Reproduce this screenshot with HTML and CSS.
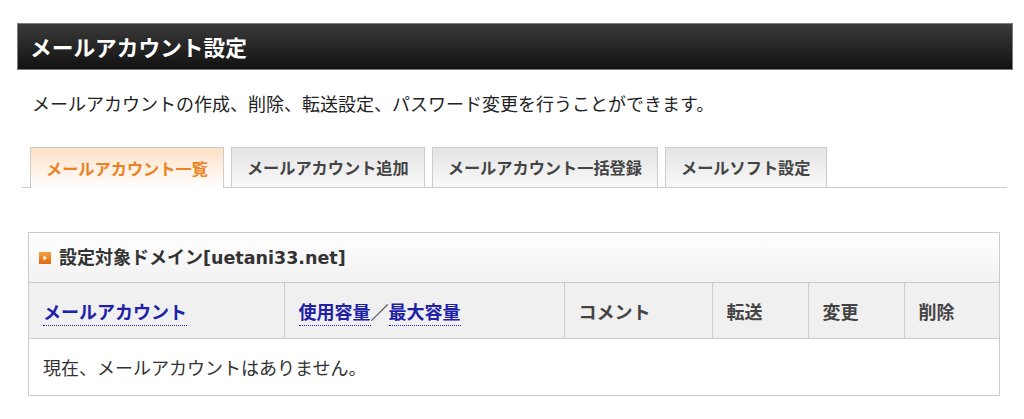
FILE: index.html
```html
<!DOCTYPE html>
<html lang="ja">
<head>
<meta charset="utf-8">
<title>メールアカウント設定</title>
<link rel="stylesheet" href="styles.css">
</head>
<body>
<div class="page">
  <h1 class="title">メールアカウント設定</h1>
  <p class="desc">メールアカウントの作成、削除、転送設定、パスワード変更を行うことができます。</p>
  <div class="tabs">
    <div class="tab active">メールアカウント一覧</div>
    <div class="tab">メールアカウント追加</div>
    <div class="tab">メールアカウント一括登録</div>
    <div class="tab">メールソフト設定</div>
  </div>
  <div class="panel">
    <div class="panel-head">
      <span class="icon"><svg width="12" height="12" viewBox="0 0 12 12"><defs><linearGradient id="og" x1="0" y1="0" x2="0" y2="1"><stop offset="0" stop-color="#f7a040"/><stop offset="1" stop-color="#e06a10"/></linearGradient></defs><rect x="0" y="0" width="12" height="12" fill="url(#og)"/><polygon points="4.5,3.5 8,6 4.5,8.5" fill="#fff"/></svg></span>
      <span class="domain">設定対象ドメイン<span class="latin">[uetani33.net]</span></span>
    </div>
    <table class="list">
      <colgroup>
        <col class="c1"><col class="c2"><col class="c3"><col class="c4"><col class="c5"><col class="c6">
      </colgroup>
      <thead>
        <tr>
          <th><a href="#" class="sort">メールアカウント</a></th>
          <th><a href="#" class="sort">使用容量</a><span class="slash">／</span><a href="#" class="sort">最大容量</a></th>
          <th>コメント</th>
          <th>転送</th>
          <th>変更</th>
          <th>削除</th>
        </tr>
      </thead>
      <tbody>
        <tr><td colspan="6">現在、メールアカウントはありません。</td></tr>
      </tbody>
    </table>
  </div>
</div>
</body>
</html>
```

FILE: styles.css
```css
html, body {
  margin: 0;
  padding: 0;
  background: #fff;
}
body {
  font-family: "Noto Sans CJK JP", "Noto Sans", sans-serif;
  color: #333;
}
.page {
  padding: 23px 0 0 17px;
}
.title {
  box-sizing: border-box;
  width: 996px;
  height: 47px;
  margin: 0;
  padding-left: 12px;
  display: flex;
  align-items: center;
  border: 1px solid #7a7a7a;
  background: linear-gradient(#3a3a3a, #121212);
  color: #fff;
  font-size: 21.7px;
  font-weight: bold;
  line-height: 1;
}
.desc {
  margin: 20px 0 0 15px;
  font-size: 18px;
  line-height: 26px;
  color: #222;
}
.tabs {
  box-sizing: border-box;
  width: 985px;
  margin: 31px 0 0 5px;
  padding-left: 8px;
  display: flex;
  gap: 7px;
  border-bottom: 1px solid #cccccc;
}
.tab {
  box-sizing: border-box;
  height: 40px;
  padding: 0 15px;
  display: flex;
  align-items: center;
  border: 1px solid #cccccc;
  border-bottom: none;
  background: linear-gradient(#e3e3e3, #f9f9f9);
  font-size: 16.2px;
  font-weight: bold;
  color: #444;
  line-height: 1;
}
.tab.active {
  background: linear-gradient(#fde0c6, #ffffff);
  color: #ea8224;
  height: 41px;
  margin-bottom: -1px;
}
.panel {
  box-sizing: border-box;
  width: 972px;
  margin: 44px 0 0 11px;
  border: 1px solid #cccccc;
}
.panel-head {
  height: 49px;
  display: flex;
  align-items: center;
  padding-left: 10px;
  background: linear-gradient(#ffffff, #f2f2f2);
  border-bottom: 1px solid #cccccc;
}
.icon {
  display: flex;
  width: 12px;
  height: 12px;
  margin-right: 8px;
}
.domain {
  font-size: 18px;
  font-weight: bold;
  color: #333;
  line-height: 1;
}
.latin {
  font-family: "DejaVu Sans", "Noto Sans", sans-serif;
  font-size: 17.5px;
}
.list {
  width: 100%;
  border-collapse: collapse;
  table-layout: fixed;
}
.c1 { width: 255px; }
.c2 { width: 280px; }
.c3 { width: 148px; }
.c4 { width: 96px; }
.c5 { width: 96px; }
.c6 { width: auto; }
.list th {
  height: 55px;
  padding: 0 0 0 14px;
  text-align: left;
  background: #f0f0f0;
  border-left: 1px solid #cccccc;
  border-bottom: 1px solid #cccccc;
  font-size: 18px;
  font-weight: bold;
  color: #444;
  line-height: 1;
}
.list th:first-child {
  border-left: none;
}
.sort {
  color: #2020a8;
  text-decoration: none;
  border-bottom: 1px dotted #2020a8;
  padding-bottom: 1px;
}
.slash {
  color: #333;
}
.list td {
  height: 56px;
  padding: 0 0 0 14px;
  font-size: 18px;
  color: #333;
  line-height: 1;
}
```
